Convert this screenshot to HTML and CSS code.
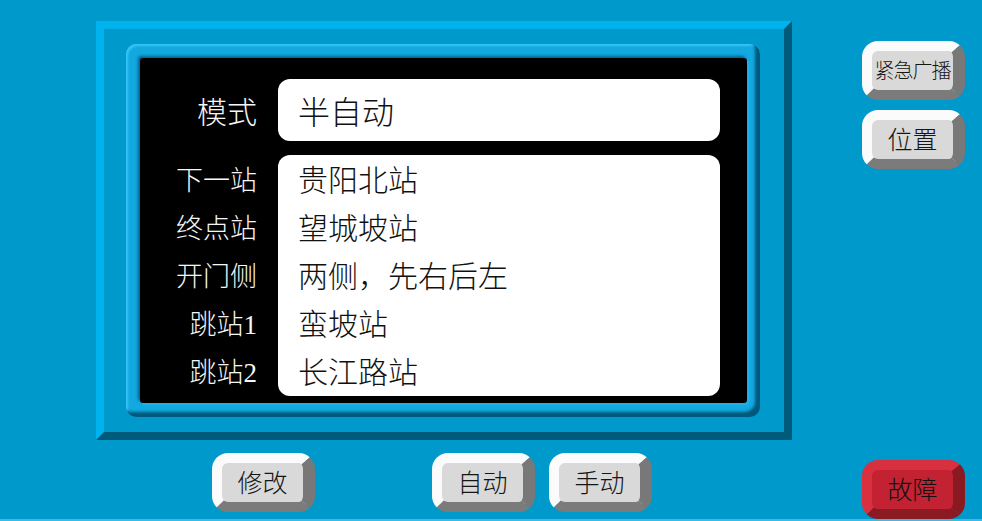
FILE: index.html
```html
<!DOCTYPE html>
<html lang="zh-CN">
<head>
<meta charset="utf-8">
<title>模式</title>
<link rel="stylesheet" href="styles.css">
</head>
<body>
<div class="screen">
  <div class="left">
    <div class="frame">
      <div class="bezel">
        <div class="panel">
          <div class="row mode-row">
            <div class="mode-label">模式</div>
            <div class="box mode-box">半自动</div>
          </div>
          <div class="row info-row">
            <div class="label-col">
              <div class="label">下一站</div>
              <div class="label">终点站</div>
              <div class="label">开门侧</div>
              <div class="label">跳站1</div>
              <div class="label">跳站2</div>
            </div>
            <div class="box info-box">
              <div class="line">贵阳北站</div>
              <div class="line">望城坡站</div>
              <div class="line">两侧，先右后左</div>
              <div class="line">蛮坡站</div>
              <div class="line">长江路站</div>
            </div>
          </div>
        </div>
      </div>
    </div>
    <div class="bottom-row">
      <div class="btn btn-edit">修改</div>
      <div class="btn btn-auto">自动</div>
      <div class="btn btn-manual">手动</div>
    </div>
  </div>
  <div class="right">
    <div class="btn btn-small">紧急广播</div>
    <div class="btn btn-pos">位置</div>
    <div class="btn btn-fault">故障</div>
  </div>
</div>
</body>
</html>
```
FILE: styles.css
```css
html, body {
  margin: 0;
  padding: 0;
}
body {
  background: #0099cc;
  font-family: "Liberation Serif", "Noto Sans CJK SC", serif;
}
.screen {
  box-sizing: border-box;
  width: 982px;
  height: 521px;
  padding-top: 21px;
  padding-left: 96px;
  display: flex;
  border-bottom: 2px solid #3fb8e4;
}
.left {
  width: 696px;
  display: flex;
  flex-direction: column;
}
.frame {
  box-sizing: border-box;
  width: 696px;
  height: 419px;
  border: 8px solid;
  border-color: #00b3ef #005b7b #005b7b #00b3ef;
  padding: 15px 24px 15px 22px;
}
.bezel {
  box-sizing: border-box;
  height: 373px;
  border-radius: 10px;
  padding: 14px 13px 14px 14px;
  background: #12a8e0;
  box-shadow: inset -5px -5px 3px #00587a, inset 2px 2px 2px #35c4f6;
}
.panel {
  box-sizing: border-box;
  height: 345px;
  background: #000;
  border-radius: 3px;
  padding: 21px 27px 7px 0;
  box-shadow: -2px -2px 3px #00628c, 2px 2px 2px #22b4ec;
}
.row {
  display: flex;
  gap: 21px;
}
.mode-row {
  align-items: center;
  height: 62px;
}
.info-row {
  margin-top: 14px;
}
.mode-label {
  width: 117px;
  text-align: right;
  color: #f6f6f6;
  font-size: 30px;
  font-weight: 300;
}
.box {
  flex: 1;
  background: #fff;
  border-radius: 12px;
  box-sizing: border-box;
  padding-left: 20px;
  color: #111;
}
.mode-box {
  height: 62px;
  display: flex;
  align-items: center;
  font-size: 32px;
  font-weight: 300;
}
.label-col {
  width: 117px;
  padding-top: 2px;
  text-align: right;
  color: #f6f6f6;
}
.label {
  height: 48px;
  line-height: 48px;
  font-size: 27px;
  font-weight: 300;
}
.info-box {
  height: 241px;
  padding-top: 2px;
}
.line {
  height: 48px;
  line-height: 48px;
  font-size: 30px;
  font-weight: 300;
}
.bottom-row {
  display: flex;
  margin-top: 13px;
  padding-left: 116px;
}
.btn {
  box-sizing: border-box;
  width: 103px;
  height: 59px;
  border-style: solid;
  border-width: 10px 12px 10px 10px;
  border-color: #fbfbfb #787878 #7b7b7b #fbfbfb;
  border-radius: 16px;
  background: #d9d9d9;
  display: flex;
  align-items: center;
  justify-content: center;
  padding-bottom: 3px;
  color: #151515;
  font-family: "Noto Sans CJK SC", sans-serif;
  font-size: 25px;
  font-weight: 300;
}
.btn-auto {
  margin-left: 117px;
}
.btn-manual {
  margin-left: 14px;
}
.right {
  margin-left: 70px;
  display: flex;
  flex-direction: column;
}
.btn-small {
  margin-top: 20px;
  font-size: 20px;
  letter-spacing: -1px;
}
.btn-pos {
  margin-top: 10px;
}
.btn-fault {
  margin-top: auto;
  background: #c22231;
  border-color: #d8303f #8a1a22 #8c1a22 #d8303f;
  color: #111;
}
```
